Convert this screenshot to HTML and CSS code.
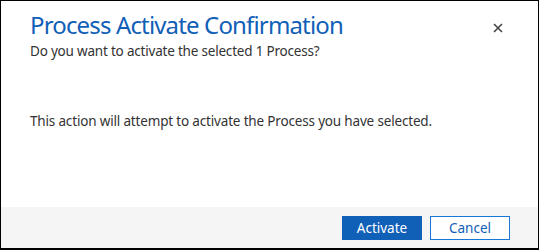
FILE: index.html
```html
<!DOCTYPE html>
<html>
<head>
<meta charset="utf-8">
<link rel="stylesheet" href="styles.css">
</head>
<body>
<div class="dialog">
  <div class="header">
    <div class="titles">
      <h1 class="title">Process Activate Confirmation</h1>
      <p class="subtitle">Do you want to activate the selected 1 Process?</p>
    </div>
    <button class="close" aria-label="Close">
      <svg width="10" height="10" viewBox="0 0 10 10"><path d="M1 1 L9 9 M9 1 L1 9" stroke="#444" stroke-width="1.6" fill="none"/></svg>
    </button>
  </div>
  <div class="content">
    <p class="message">This action will attempt to activate the Process you have selected.</p>
  </div>
  <div class="footer">
    <button class="btn primary">Activate</button>
    <button class="btn secondary">Cancel</button>
  </div>
</div>
</body>
</html>
```
FILE: styles.css
```css
html, body {
  margin: 0;
  padding: 0;
  background: #fff;
}
body {
  font-family: "Segoe UI", "Noto Sans", "Open Sans", sans-serif;
}
.dialog {
  width: 539px;
  height: 250px;
  box-sizing: border-box;
  border: 1px solid #000;
  border-bottom-width: 2px;
  display: flex;
  flex-direction: column;
  background: #fff;
}
.header {
  display: flex;
  justify-content: space-between;
  align-items: flex-start;
  padding: 7px 0 0 29px;
}
.title {
  margin: 0;
  font-size: 24px;
  font-weight: 400;
  color: #1160b7;
  line-height: 34px;
  letter-spacing: -0.85px;
}
.subtitle {
  margin: 0;
  font-size: 13.5px;
  color: #333;
  line-height: 18px;
  letter-spacing: -0.2px;
}
.close {
  border: none;
  background: none;
  padding: 0;
  margin: 14px 34px 0 0;
  width: 12px;
  height: 12px;
  display: flex;
  align-items: center;
  justify-content: center;
}
.content {
  flex: 1;
  padding: 52px 0 0 29px;
}
.message {
  margin: 0;
  font-size: 13.5px;
  color: #333;
  line-height: 18px;
  letter-spacing: -0.17px;
}
.footer {
  background: #f5f5f5;
  height: 41px;
  display: flex;
  justify-content: flex-end;
  align-items: center;
  gap: 8px;
  padding-right: 28px;
}
.btn {
  width: 80px;
  height: 24px;
  box-sizing: border-box;
  font-family: inherit;
  font-size: 13.5px;
  padding: 0;
  line-height: 20px;
}
.primary {
  background: #1160b7;
  border: 1px solid #1160b7;
  color: #fff;
}
.secondary {
  background: #fff;
  border: 1px solid #1778d6;
  color: #1160b7;
}
```
